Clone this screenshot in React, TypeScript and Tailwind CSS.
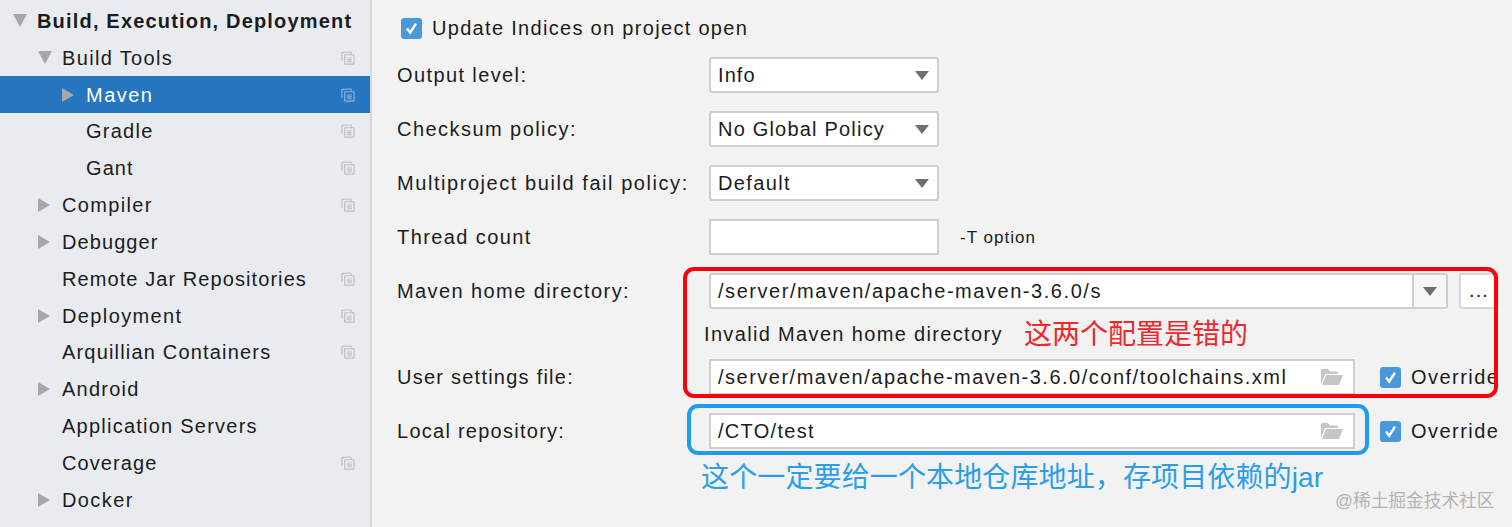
const FONT = "font-['Liberation_Sans','Noto_Sans_CJK_SC',sans-serif]";

function CopyIcon({ selected }: { selected?: boolean }) {
  const c = selected ? "#8fb4d8" : "#bcbfc2";
  return (
    <svg width="14" height="14" viewBox="0 0 15 15" fill="none" stroke={c} strokeWidth="1.3">
      <path d="M4 1.5H1.6a.6.6 0 0 0-.6.6v8.4" />
      <path d="M4 1.2h7V4" opacity="0.8" />
      <rect x="4" y="4" width="10" height="10" rx="0.6" />
      <path d="M6.5 7.5h5M6.5 9.5h5M6.5 11.5h5" />
    </svg>
  );
}

function Arrow({ dir }: { dir?: "down" | "right" }) {
  if (!dir) return null;
  const c = "#a4a7ab";
  return dir === "down" ? (
    <svg width="14" height="13" viewBox="0 0 14 13"><path d="M0 0h14L7 13z" fill={c} /></svg>
  ) : (
    <svg width="12" height="14" viewBox="0 0 12 14"><path d="M0 0l12 7L0 14z" fill={c} /></svg>
  );
}

type Item = { label: string; level: 0 | 1 | 2; arrow?: "down" | "right"; copy?: boolean; selected?: boolean; t: string };

const items: Item[] = [
  { label: "Build, Execution, Deployment", level: 0, arrow: "down", t: "font-bold tracking-[1.18px]" },
  { label: "Build Tools", level: 1, arrow: "down", copy: true, t: "tracking-[1.35px]" },
  { label: "Maven", level: 2, arrow: "right", copy: true, selected: true, t: "tracking-[1.48px]" },
  { label: "Gradle", level: 2, copy: true, t: "tracking-[1.25px]" },
  { label: "Gant", level: 2, copy: true, t: "tracking-[1.08px]" },
  { label: "Compiler", level: 1, arrow: "right", copy: true, t: "tracking-[1.33px]" },
  { label: "Debugger", level: 1, arrow: "right", t: "tracking-[1.08px]" },
  { label: "Remote Jar Repositories", level: 1, copy: true, t: "tracking-[1.08px]" },
  { label: "Deployment", level: 1, arrow: "right", copy: true, t: "tracking-[1.38px]" },
  { label: "Arquillian Containers", level: 1, copy: true, t: "tracking-[1.18px]" },
  { label: "Android", level: 1, arrow: "right", t: "tracking-[1.22px]" },
  { label: "Application Servers", level: 1, t: "tracking-[1.24px]" },
  { label: "Coverage", level: 1, copy: true, t: "tracking-[1.08px]" },
  { label: "Docker", level: 1, arrow: "right", t: "tracking-[1.4px]" },
];

function TreeRow({ item }: { item: Item }) {
  const pad = item.level === 0 ? "pl-[13px]" : item.level === 1 ? "pl-[38px]" : "pl-[62px]";
  return (
    <div className={`flex h-[36.85px] shrink-0 items-center pr-[15px] ${pad} ${item.selected ? "bg-[#2675bf] text-white" : "text-[#1c1c1c]"}`}>
      <span className="flex w-[24px] shrink-0 items-center">
        <Arrow dir={item.arrow} />
      </span>
      <span className={item.t}>{item.label}</span>
      {item.copy && (
        <span className="ml-auto flex">
          <CopyIcon selected={item.selected} />
        </span>
      )}
    </div>
  );
}

function Check() {
  return (
    <span className="flex h-[21px] w-[21px] shrink-0 items-center justify-center rounded-[3px] bg-[#4b97dc]">
      <svg width="15" height="15" viewBox="0 0 15 15" fill="none" stroke="#fff" strokeWidth="2.4">
        <path d="M3 7.6l3.2 4L12 2.6" />
      </svg>
    </span>
  );
}

function Caret() {
  return (
    <svg width="14" height="9" viewBox="0 0 14 9"><path d="M0 0h14L7 9z" fill="#6f6f6f" /></svg>
  );
}

function Select({ value, t }: { value: string; t: string }) {
  return (
    <div className="flex h-[36px] w-[230px] items-center justify-between rounded-[3px] border-2 border-[#cfcfcf] bg-white pl-[7px] pr-[8px]">
      <span className={t}>{value}</span>
      <Caret />
    </div>
  );
}

function Folder() {
  return (
    <svg width="24" height="18" viewBox="0 0 24 18">
      <path d="M1 16V2.5L2 1h6l2 2.5h8V6H5L1 16z" fill="#c3c7ca" />
      <path d="M2 17L6 7h17l-4 10z" fill="#c3c7ca" />
    </svg>
  );
}

function Row({ label, t, children, className = "" }: { label: string; t: string; children: React.ReactNode; className?: string }) {
  return (
    <div className={`flex h-[36px] items-center ${className}`}>
      <span className="w-[312px] shrink-0"><span className={t}>{label}</span></span>
      {children}
    </div>
  );
}

function PathField({ value, t }: { value: string; t: string }) {
  return (
    <div className="flex h-[36px] w-[646px] items-center justify-between border-2 border-[#cfcfcf] bg-white pl-[7px] pr-[9px]">
      <span className={t}>{value}</span>
      <Folder />
    </div>
  );
}

function Override() {
  return (
    <div className="ml-[25px] flex items-center gap-[10px]">
      <Check />
      <span className="tracking-[1.45px]">Override</span>
    </div>
  );
}

export default function App() {
  return (
    <div className={`relative flex h-[527px] w-[1512px] overflow-hidden bg-[#f2f2f2] text-[20px] leading-none tracking-[1.08px] text-[#1c1c1c] ${FONT}`}>
      <aside className="flex w-[372px] shrink-0 flex-col border-r-2 border-[#d6d8da] bg-[#e8ebf0] pt-[2.4px]">
        {items.map((it) => (
          <TreeRow key={it.label} item={it} />
        ))}
      </aside>
      <main className="flex min-w-0 flex-1 flex-col pl-[25px] pt-[10px]">
        <div className="flex h-[36px] items-center gap-[10px] pl-[4px]">
          <Check />
          <span className="tracking-[1.31px]">Update Indices on project open</span>
        </div>
        <Row label="Output level:" t="tracking-[1.39px]" className="mt-[11px]"><Select value="Info" t="tracking-[1.08px]" /></Row>
        <Row label="Checksum policy:" t="tracking-[1.45px]" className="mt-[18px]"><Select value="No Global Policy" t="tracking-[1.2px]" /></Row>
        <Row label="Multiproject build fail policy:" t="tracking-[1.56px]" className="mt-[18px]"><Select value="Default" t="tracking-[1.37px]" /></Row>
        <Row label="Thread count" t="tracking-[1.41px]" className="mt-[18px]">
          <div className="h-[36px] w-[230px] border-2 border-[#cfcfcf] bg-white" />
          <span className="ml-[21px] text-[17px] tracking-[1.03px]">-T option</span>
        </Row>
        <Row label="Maven home directory:" t="tracking-[1.41px]" className="mt-[18px]">
          <div className="flex h-[36px] w-[739px] items-center justify-between rounded-[3px] border-2 border-[#cfcfcf] bg-white pl-[7px]">
            <span className="tracking-[1.55px]">/server/maven/apache-maven-3.6.0/s</span>
            <span className="flex h-full w-[34px] items-center justify-center border-l-2 border-[#cfcfcf] bg-[#f7f7f7]">
              <Caret />
            </span>
          </div>
          <div className="ml-[11px] flex h-[36px] w-[40px] shrink-0 items-center justify-center rounded-[3px] border-2 border-[#d6d6d6] bg-white pb-[2px]">...</div>
        </Row>
        <div className="flex h-[50px] items-center pl-[307px]">
          <span className="tracking-[1.34px]">Invalid Maven home directory</span>
        </div>
        <Row label="User settings file:" t="tracking-[1.24px]">
          <PathField value="/server/maven/apache-maven-3.6.0/conf/toolchains.xml" t="tracking-[1.5px]" />
          <Override />
        </Row>
        <Row label="Local repository:" t="tracking-[1.26px]" className="mt-[18px]">
          <PathField value="/CTO/test" t="tracking-[1.3px]" />
          <Override />
        </Row>
      </main>

      <div className="absolute left-[683px] top-[267px] h-[131px] w-[815px] rounded-[11px] border-[4.5px] border-[#f8000c]" />
      <div className="absolute left-[687px] top-[404px] h-[51px] w-[682px] rounded-[11px] border-[4.5px] border-[#1e9df0]" />
      <span className="absolute left-[1024px] top-[321px] text-[28px] leading-[28px] tracking-normal text-[#f0282d]">这两个配置是错的</span>
      <span className="absolute left-[701px] top-[464px] text-[28px] leading-[28px] tracking-[0.13px] text-[#2b9ee8]">这个一定要给一个本地仓库地址，存项目依赖的jar</span>
      <span className="absolute left-[1335px] top-[492px] text-[17.7px] leading-[18px] tracking-normal text-[#b3b3b3]">@稀土掘金技术社区</span>
    </div>
  );
}
